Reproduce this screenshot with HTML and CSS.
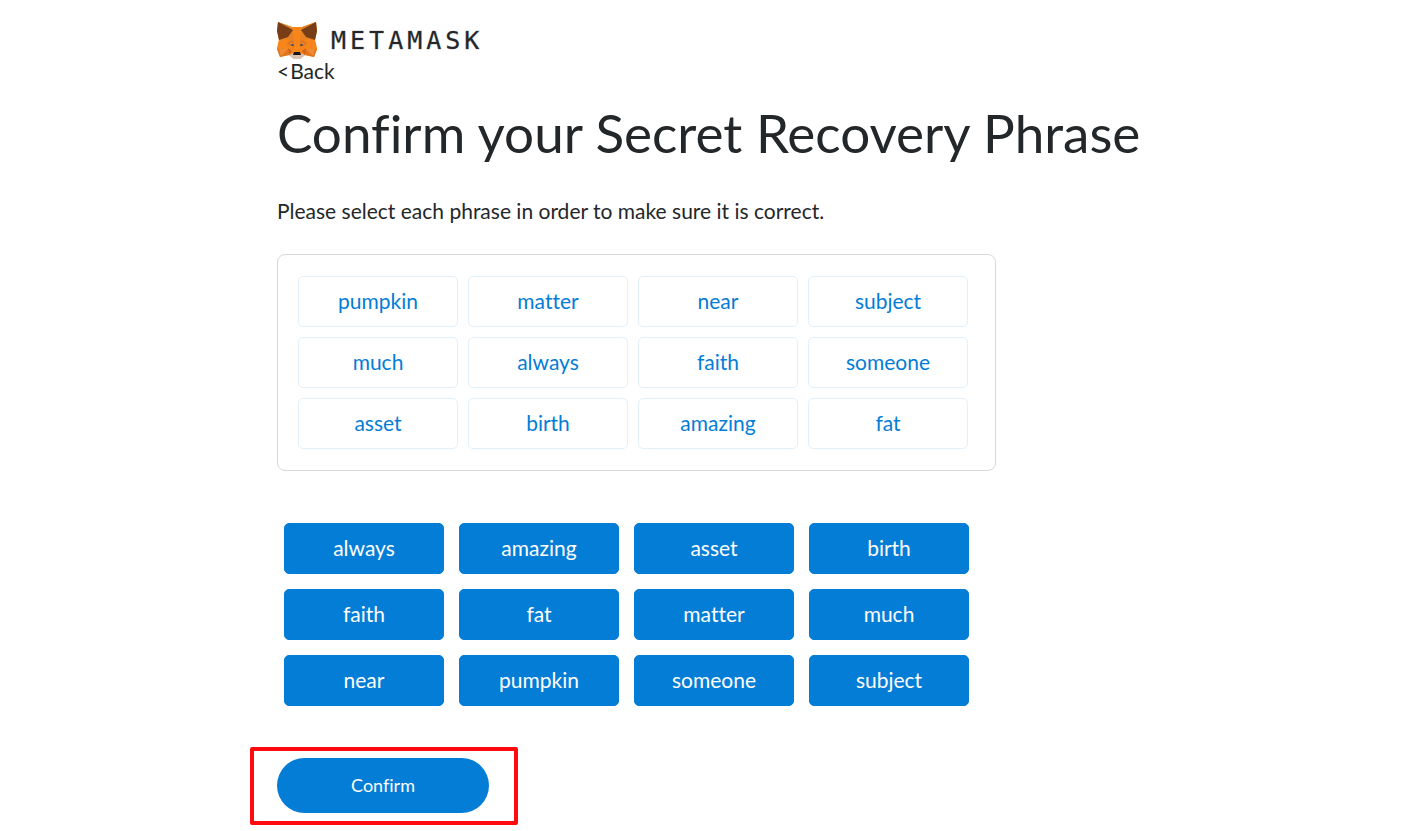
FILE: index.html
```html
<!DOCTYPE html>
<html lang="en">
<head>
<meta charset="utf-8">
<meta name="viewport" content="width=device-width, initial-scale=1">
<title>MetaMask</title>
<link rel="stylesheet" href="styles.css">
</head>
<body>
<main class="page">
  <header class="brand">
    <svg class="fox" viewBox="0 0 40 37" aria-hidden="true">
      <path fill="#f6851b" d="M1 0 15 5H25L39 0 40 9 38 18 40 27 37 35 28 33 23 37H17L12 33 3 35 0 27 2 18 0 9Z"/>
      <path fill="#e88024" d="M1 0 15 5 17 19 3 17ZM39 0 25 5 23 19 37 17Z"/>
      <path fill="#f6851b" d="M15 5H25L23 20 24 30H16L17 20ZM2 18 11 17 11 27H0ZM38 18 29 17 29 27H40Z"/>
      <path fill="#763d16" d="M1 0 16 8 11 15 2 18 0 9ZM39 0 24 8 29 15 38 18 40 9Z"/>
      <path fill="#e2761b" d="M10 21 15 18 17 20 17 25 11 23ZM30 21 25 18 23 20 23 25 29 23ZM0 27H11L12 33 3 35ZM40 27H29L28 33 37 35Z"/>
      <path fill="#f08a35" d="M2 27H11L4 34ZM38 27H29L36 34Z"/>
      <path fill="#cd6116" d="M11 26 12 33 15 29ZM29 26 28 33 25 29Z"/>
      <path fill="#d99a6c" d="M12 22 15 21 17 24ZM28 22 25 21 23 24Z"/>
      <path fill="#233447" d="M13 23 16 22 17 24ZM27 23 24 22 23 24Z"/>
      <path fill="#d7c1b3" d="M12 33 17 31H23L28 33 23 37H17Z"/>
      <path fill="#161616" d="M17 30H23L24 33H16Z"/>
    </svg>
    <span class="wordmark">METAMASK</span>
  </header>
  <a class="back" href="#"><span>&lt;</span> <span>Back</span></a>
  <h1 class="title">Confirm your Secret Recovery Phrase</h1>
  <p class="intro">Please select each phrase in order to make sure it is correct.</p>

  <section class="selected" aria-label="Selected words">
    <button class="word">pumpkin</button>
    <button class="word">matter</button>
    <button class="word">near</button>
    <button class="word">subject</button>
    <button class="word">much</button>
    <button class="word">always</button>
    <button class="word">faith</button>
    <button class="word">someone</button>
    <button class="word">asset</button>
    <button class="word">birth</button>
    <button class="word">amazing</button>
    <button class="word">fat</button>
  </section>

  <section class="choices" aria-label="Word choices">
    <button class="word word-filled">always</button>
    <button class="word word-filled">amazing</button>
    <button class="word word-filled">asset</button>
    <button class="word word-filled">birth</button>
    <button class="word word-filled">faith</button>
    <button class="word word-filled">fat</button>
    <button class="word word-filled">matter</button>
    <button class="word word-filled">much</button>
    <button class="word word-filled">near</button>
    <button class="word word-filled">pumpkin</button>
    <button class="word word-filled">someone</button>
    <button class="word word-filled">subject</button>
  </section>

  <div class="action">
    <button class="confirm">Confirm</button>
    <span class="highlight"></span>
  </div>
</main>
</body>
</html>
```
FILE: styles.css
```css
* { box-sizing: border-box; }

body {
  margin: 0;
  background: #fff;
  color: #24272a;
  font-family: Lato, "Open Sans", sans-serif;
  font-size: 21px;
  font-variant-ligatures: none;
  line-height: 28px;
}

button { font: inherit; font-variant-ligatures: none; cursor: pointer; }

.page {
  max-width: 867px;
  margin: 0 auto;
  padding: 22px 0 16px;
}

.brand {
  display: flex;
  align-items: center;
  gap: 14px;
}

.fox { width: 40px; height: 37px; }

.wordmark {
  font-family: "DejaVu Sans Mono", monospace;
  font-size: 25px;
  line-height: 36px;
  letter-spacing: 4px;
  -webkit-text-stroke: 1px #24272a44;
}

.back {
  display: flex;
  gap: 1px;
  width: max-content;
  color: inherit;
  line-height: 24px;
  text-decoration: none;
}

.title {
  margin: 18px 0 0;
  font-size: 53px;
  font-weight: 400;
  line-height: 64px;
}

.intro { margin: 32px 0 29px; }

.selected,
.choices {
  display: grid;
  grid-template-columns: repeat(auto-fill, 160px);
  max-width: 719px;
}

.selected {
  gap: 10px;
  padding: 21px 20px;
  border: 1px solid #d6d9dc;
  border-radius: 8px;
}

.choices {
  gap: 15px;
  margin-top: 52px;
  padding: 0 7px;
}

.word {
  height: 51px;
  padding: 0 0 2px;
  border: 1px solid #e1f0fa;
  border-radius: 5px;
  background: #fff;
  color: #037dd6;
}

.word-filled {
  border-color: #037dd6;
  background: #037dd6;
  color: #fff;
}

.action {
  position: relative;
  width: 212px;
  margin-top: 52px;
}

.confirm {
  display: block;
  width: 100%;
  height: 55px;
  padding: 0 0 2px;
  border: 0;
  border-radius: 28px;
  background: #037dd6;
  color: #fff;
  font-size: 18px;
}

.highlight {
  position: absolute;
  inset: -11px -29px -12px -27px;
  border: 4px solid #ff0a0f;
  border-radius: 2px;
  pointer-events: none;
}
```
